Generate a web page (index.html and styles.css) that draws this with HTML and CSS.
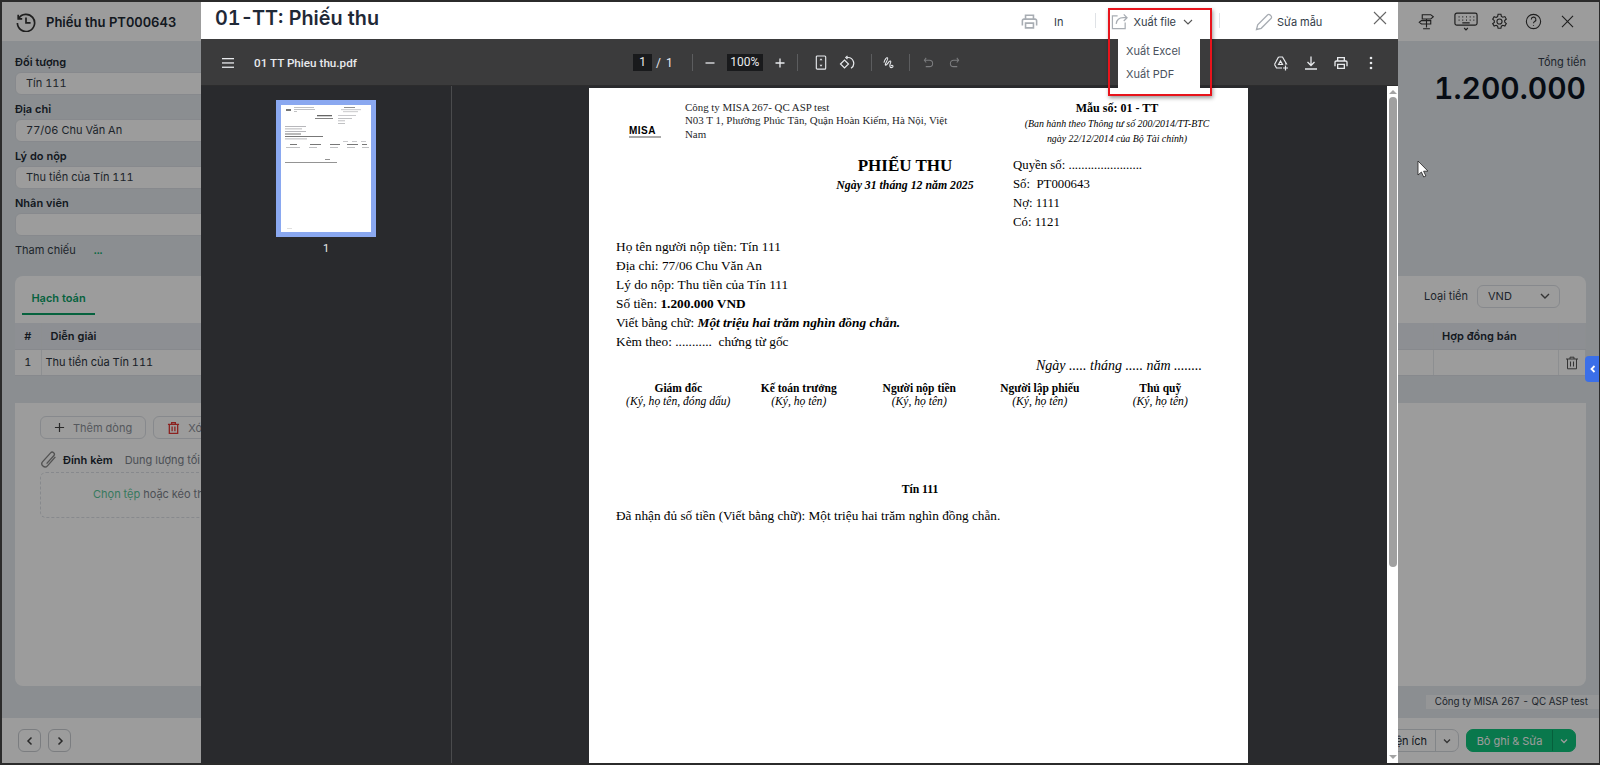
FILE: index.html
```html
<!DOCTYPE html>
<html>
<head>
  <meta charset="utf-8" />
  <title>Phiếu thu PT000643</title>
  <link rel="stylesheet" href="styles.css">
</head>
<body>
<div class="frame">

  <!-- trang phieu thu phia sau -->
  <div class="app">
    <div class="app_header">
      <svg class="hist_icon" viewBox="0 0 20 20" fill="none" stroke="#333" stroke-width="1.7"><path d="M2.6 6.5A8.6 8.6 0 1 1 1.4 11"/><path d="M2.2 2.8v4h4"/><path d="M10 5.5V10.8h4.6"/></svg>
      <div class="app_title">Phiếu thu PT000643</div>
      <div class="app_tools">
        <svg class="sign" viewBox="0 0 20 20" fill="none" stroke="#333" stroke-width="1.3"><path d="M10 7v10M6 18.500h8M5 2h10l3 2.500L15 7H5zM15 9H4L1.500 11 4 13h11z"/></svg>
        <svg class="wide" viewBox="0 0 26 20" fill="none" stroke="#333" stroke-width="1.3"><rect x="1" y="1" width="24" height="13" rx="2"/><path d="M5 5h1M9 5h1M13 5h1M17 5h1M21 5h1M5 8.500h1M9 8.500h1M13 8.500h1M17 8.500h1M21 8.500h1M9 11.500h8M11 17l2 2 2-2"/></svg>
        <svg viewBox="0 0 20 20" fill="none" stroke="#333" stroke-width="1.3"><circle cx="10" cy="10" r="3"/><path d="M8.300 1.500h3.400l.5 2.500 1.700 1 2.400-.8 1.700 2.900-1.900 1.700v1.900l1.900 1.700-1.700 2.900-2.400-.8-1.700 1-.5 2.500H8.300l-.5-2.500-1.700-1-2.400.8-1.700-2.900L3.900 11V9L2 7.300l1.700-2.900 2.400.8 1.700-1z"/></svg>
        <svg viewBox="0 0 20 20" fill="none" stroke="#333" stroke-width="1.3"><circle cx="10" cy="10" r="8.400"/><path d="M7.400 7.600a2.700 2.700 0 1 1 4 2.300c-.9.500-1.400 1-1.400 2.100M10 14v1"/></svg>
        <svg viewBox="0 0 20 20" fill="none" stroke="#333" stroke-width="1.3"><path d="M3.500 3.500l13 13M16.500 3.500l-13 13"/></svg>
      </div>
    </div>

    <div class="app_main">
      <div class="top_row">
        <div class="form">
          <div class="field"><label>Đối tượng</label><div class="input">Tín 111</div></div>
          <div class="field"><label>Địa chỉ</label><div class="input">77/06 Chu Văn An</div></div>
          <div class="field"><label>Lý do nộp</label><div class="input">Thu tiền của Tín 111</div></div>
          <div class="field"><label>Nhân viên</label><div class="input"></div></div>
          <div class="refs">Tham chiếu <span>...</span></div>
        </div>
        <div class="total">
          <div class="total_label">Tổng tiền</div>
          <div class="total_value">1.200.000</div>
        </div>
      </div>

      <div class="card">
        <div class="card_head">
          <div class="tab">Hạch toán</div>
          <div class="currency">
            <span>Loại tiền</span>
            <div class="select">VND
              <svg viewBox="0 0 12 12" fill="none" stroke="#555" stroke-width="1.4"><path d="M2 4l4 4 4-4"/></svg>
            </div>
          </div>
        </div>
        <table class="grid">
          <tr>
            <th class="c_no">#</th><th class="c_desc">Diễn giải</th><th class="c_contract">Hợp đồng bán</th><th class="c_del"></th>
          </tr>
          <tr>
            <td class="c_no">1</td><td>Thu tiền của Tín 111</td><td></td>
            <td class="c_del"><svg viewBox="0 0 14 14" fill="none" stroke="#555" stroke-width="1"><path d="M1 3h12M5 3V1.200h4V3M2.500 3v9.800h9V3M5.500 5.500v5M8.500 5.500v5"/></svg></td>
          </tr>
        </table>
      </div>

      <div class="panel">
        <div class="btn_row">
          <div class="btn"><svg viewBox="0 0 12 12" fill="none" stroke="#444" stroke-width="1.3"><path d="M6 1v10M1 6h10"/></svg>Thêm dòng</div>
          <div class="btn btn_del"><svg viewBox="0 0 14 14" fill="none" stroke="#e53935" stroke-width="1.400"><path d="M1 3h12M5 3V1.200h4V3M2.500 3v9.800h9V3M5.500 5.500v5M8.500 5.500v5"/></svg>Xóa hết dòng</div>
        </div>
        <div class="attach">
          <svg viewBox="0 0 16 18" fill="none" stroke="#888" stroke-width="1.300"><path d="M14.500 6.500L7 15a3 3 0 0 1-4.500-4l7.500-8.300a2 2 0 0 1 3 2.700l-6.800 7.500"/></svg>
          <b>Đính kèm</b><span>Dung lượng tối đa 5MB</span>
        </div>
        <div class="dropzone"><span>Chọn tệp</span> hoặc kéo thả tệp vào đây</div>
      </div>

      <div class="company_row"><div class="company_chip">Công ty MISA 267 - QC ASP test</div></div>
    </div>

    <div class="app_footer">
      <div class="nav_btn"><svg viewBox="0 0 10 10" fill="none" stroke="#444" stroke-width="1.500"><path d="M6.500 1.500L3 5l3.500 3.500"/></svg></div>
      <div class="nav_btn"><svg viewBox="0 0 10 10" fill="none" stroke="#444" stroke-width="1.500"><path d="M3.500 1.500L7 5 3.500 8.500"/></svg></div>
      <div class="foot_right">
        <div class="split">
          <span>Tiện ích</span>
          <i><svg viewBox="0 0 10 10" fill="none" stroke="#555" stroke-width="1.300"><path d="M2 3.500l3 3 3-3"/></svg></i>
        </div>
        <div class="split split_green">
          <span>Bỏ ghi &amp; Sửa</span>
          <i><svg viewBox="0 0 10 10" fill="none" stroke="#fff" stroke-width="1.300"><path d="M2 3.500l3 3 3-3"/></svg></i>
        </div>
      </div>
    </div>
  </div>

  <div class="dim"></div>
  <div class="side_toggle"><svg viewBox="0 0 8 10" fill="none" stroke="#fff" stroke-width="1.800"><path d="M5.500 2L2.500 5l3 3"/></svg></div>

  <!-- cursor -->
  <svg class="cursor" viewBox="0 0 11 18"><path d="M1 1v14l3.400-3 2.300 5 2.200-1-2.300-4.800H11z" fill="#fff" stroke="#222" stroke-width="0.800"/></svg>

  <!-- popup xem mau in -->
  <div class="modal">
    <div class="modal_head">
      <div class="modal_title">01-TT: Phiếu thu</div>
      <div class="act act_print">
        <svg viewBox="0 0 24 24" fill="#a8adb3"><path d="M19 8h-1V3H6v5H5c-1.660 0-3 1.340-3 3v6h4v4h12v-4h4v-6c0-1.660-1.340-3-3-3zM8 5h8v3H8V5zm8 14H8v-4h8v4zm2-2v-4H6v4H4v-6c0-.550.450-1 1-1h14c.550 0 1 .450 1 1v6h-2z"/></svg>
        <span>In</span>
      </div>
      <div class="sep sep_a"></div>
      <div class="act act_export">
        <svg viewBox="0 0 18 18" fill="none" stroke="#a8adb3" stroke-width="1.300"><path d="M7 3H1.500v13.500H15V10"/><path d="M5.500 11.500C6 7.500 9 5 13 5h3.500M13.500 1.500L17 5l-3.500 3.500"/></svg>
        <span>Xuất file</span>
        <svg class="chev" viewBox="0 0 10 10" fill="none" stroke="#555" stroke-width="1.100"><path d="M1 3l4 4 4-4"/></svg>
      </div>
      <div class="sep sep_b"></div>
      <div class="act act_edit">
        <svg viewBox="0 0 18 18" fill="none" stroke="#a8adb3" stroke-width="1.300"><path d="M1.500 16.500l1.200-4.700L12.500 2a1.800 1.800 0 0 1 2.600 0l.9.900a1.800 1.800 0 0 1 0 2.600l-9.800 9.800z"/></svg>
        <span>Sửa mẫu</span>
      </div>
      <svg class="modal_close" viewBox="0 0 14 14" fill="none" stroke="#666" stroke-width="1.100"><path d="M1 1l12 12M13 1L1 13"/></svg>
    </div>

    <div class="pdf_bar">
      <svg class="bar_menu" viewBox="0 0 12 10" fill="#e8eaed"><rect y="0" width="12" height="1.300"/><rect y="4.300" width="12" height="1.300"/><rect y="8.600" width="12" height="1.300"/></svg>
      <div class="pdf_name">01 TT Phieu thu.pdf</div>
      <div class="pager"><span class="page_box">1</span><span class="slash">/</span><span>1</span></div>
      <div class="bar_sep sep_1"></div>
      <svg class="bar_i i_minus" viewBox="0 0 12 12" stroke="#e8eaed" stroke-width="1.300"><path d="M1.500 6h9"/></svg>
      <span class="zoom_box">100%</span>
      <svg class="bar_i i_plus" viewBox="0 0 12 12" stroke="#e8eaed" stroke-width="1.300"><path d="M1.500 6h9M6 1.500v9"/></svg>
      <div class="bar_sep sep_2"></div>
      <svg class="bar_i i_fit" viewBox="0 0 12 16" fill="none" stroke="#e8eaed" stroke-width="1.200"><rect x="1" y="1" width="10" height="14" rx="1"/><path d="M6 3.500l1.500 2h-3zM6 12.500l1.500-2h-3z" fill="#e8eaed" stroke="none"/></svg>
      <svg class="bar_i i_rotate" viewBox="0 0 16 16" fill="none" stroke="#e8eaed" stroke-width="1.200"><path d="M1.500 9L5.500 5l4 4-4 4z"/><path d="M8 2.500h1a5.800 5.800 0 0 1 3 10.700M8.500 .8L6.800 2.500l1.700 1.700"/></svg>
      <div class="bar_sep sep_3"></div>
      <svg class="bar_i i_draw" viewBox="0 0 14 14" fill="none" stroke="#e8eaed" stroke-width="1.100"><path d="M1 6.500C2 3 4 .5 5 1.500 6.200 3 2 7 2.500 9c.4 1.500 2.500-1.500 4-3.500 1-1.200 2.300-.8 1.800.8-.4 1.500-1.600 3-.8 4.700.8 1.500 3.300 1.200 3.300-.5 0-1.500-2-1.500-2.300 0"/></svg>
      <div class="bar_sep sep_4"></div>
      <svg class="bar_i i_undo" viewBox="0 0 12 12" fill="none" stroke="#7c7d7f" stroke-width="1.100"><path d="M3.500 1L1.500 3.500 3.500 6M1.500 3.500H7a3.500 3.500 0 0 1 0 7H3"/></svg>
      <svg class="bar_i i_redo" viewBox="0 0 12 12" fill="none" stroke="#7c7d7f" stroke-width="1.100"><path d="M8.500 1l2 2.500L8.500 6M10.500 3.500H5a3.500 3.500 0 0 0 0 7h4"/></svg>
      <div class="bar_right">
        <svg viewBox="0 0 16 16" fill="none" stroke="#e8eaed" stroke-width="1.200"><path d="M5.500 2h4l4 7H12M1.500 9.500L5.500 2M1.500 9.500l2 3.500h5.500M5.500 9.500L7.500 6l2 3.500z"/><path d="M12.500 10.500v5M10 13h5"/></svg>
        <svg viewBox="0 0 16 16" fill="none" stroke="#e8eaed" stroke-width="1.300"><path d="M8 1.500v8.500M4.500 7L8 10.500 11.500 7M2 14h12"/></svg>
        <svg viewBox="0 0 24 24" fill="#e8eaed"><path d="M19 8h-1V3H6v5H5c-1.660 0-3 1.340-3 3v6h4v4h12v-4h4v-6c0-1.660-1.340-3-3-3zM8 5h8v3H8V5zm8 14H8v-4h8v4zm2-2v-4H6v4H4v-6c0-.550.450-1 1-1h14c.550 0 1 .450 1 1v6h-2z"/></svg>
        <svg viewBox="0 0 16 16" fill="#e8eaed"><circle cx="8" cy="3" r="1.300"/><circle cx="8" cy="8" r="1.300"/><circle cx="8" cy="13" r="1.300"/></svg>
      </div>
    </div>

    <div class="pdf_body">
      <div class="thumbs">
        <div class="thumb">
          <!-- trang thu nho: chi la cac vach mo -->
          <svg class="thumb_page" viewBox="0 0 90 127" fill="#a5a6aa">
            <rect x="5" y="4" width="5" height="2" fill="#777"/>
            <rect x="13" y="2" width="20" height=".7"/><rect x="13" y="4" width="21" height=".7"/><rect x="13" y="6" width="3" height=".7"/>
            <rect x="63" y="2" width="11" height=".8" fill="#777"/><rect x="60" y="4.500" width="20" height=".6"/><rect x="62" y="6.500" width="15" height=".6"/>
            <rect x="36" y="10" width="15" height="1.300" fill="#666"/><rect x="34" y="13" width="18" height=".9" fill="#777"/>
            <rect x="57" y="10" width="18" height=".6"/><rect x="57" y="13" width="14" height=".7"/><rect x="57" y="15.500" width="7" height=".7"/><rect x="57" y="18" width="7" height=".7"/>
            <rect x="4" y="21" width="21" height=".8"/><rect x="4" y="23.500" width="17" height=".8"/><rect x="4" y="26" width="21" height=".8"/><rect x="4" y="28.500" width="16" height="1" fill="#777"/><rect x="4" y="31" width="38" height="1" fill="#777"/><rect x="4" y="33.500" width="22" height=".8"/>
            <rect x="62" y="36" width="5" height=".6"/><rect x="71" y="36" width="5" height=".6"/><rect x="80" y="36" width="5" height=".6"/>
            <rect x="9" y="39" width="7" height="1" fill="#777"/><rect x="29" y="39" width="11" height="1" fill="#777"/><rect x="49" y="39" width="10" height="1" fill="#777"/><rect x="66" y="39" width="11" height="1" fill="#777"/><rect x="81" y="39" width="5" height="1" fill="#777"/>
            <rect x="5" y="42" width="14" height=".7"/><rect x="28" y="42" width="8" height=".7"/><rect x="49" y="42" width="8" height=".7"/><rect x="66" y="42" width="8" height=".7"/><rect x="81" y="42" width="7" height=".7"/>
            <rect x="44" y="54" width="5" height=".8" fill="#777"/>
            <rect x="4" y="57" width="52" height=".9" fill="#888"/>
            <rect x="6" y="123" width="5" height=".6" fill="#ccc"/>
          </svg>
        </div>
        <div class="thumb_no">1</div>
      </div>
      <div class="viewer">
        <div class="paper">
          <div class="p_head">
            <div class="logo"><b>MISA</b><i></i></div>
            <div class="p_company">Công ty MISA 267- QC ASP test<br>N03 T 1, Phường Phúc Tân, Quận Hoàn Kiếm, Hà Nội, Việt Nam</div>
            <div class="p_form">
              <b>Mẫu số: 01 - TT</b>
              <em>(Ban hành theo Thông tư số 200/2014/TT-BTC</em>
              <em>ngày 22/12/2014 của Bộ Tài chính)</em>
            </div>
          </div>
          <div class="p_title_row">
            <div class="p_title">
              <h1>PHIẾU THU</h1>
              <div>Ngày 31 tháng 12 năm 2025</div>
            </div>
            <div class="p_book">
              <div>Quyền số: .......................</div>
              <div>Số:&nbsp; PT000643</div>
              <div>Nợ: 1111</div>
              <div>Có: 1121</div>
            </div>
          </div>
          <div class="p_lines">
            <div>Họ tên người nộp tiền: Tín 111</div>
            <div>Địa chỉ: 77/06 Chu Văn An</div>
            <div>Lý do nộp: Thu tiền của Tín 111</div>
            <div>Số tiền: <b>1.200.000 VND</b></div>
            <div>Viết bằng chữ: <b><i>Một triệu hai trăm nghìn đồng chẵn.</i></b></div>
            <div>Kèm theo: ...........&nbsp; chứng từ gốc</div>
          </div>
          <div class="p_date">Ngày ..... tháng ..... năm ........</div>
          <div class="p_signs">
            <div><b>Giám đốc</b><em>(Ký, họ tên, đóng dấu)</em></div>
            <div><b>Kế toán trưởng</b><em>(Ký, họ tên)</em></div>
            <div><b>Người nộp tiền</b><em>(Ký, họ tên)</em></div>
            <div><b>Người lập phiếu</b><em>(Ký, họ tên)</em></div>
            <div><b>Thủ quỹ</b><em>(Ký, họ tên)</em></div>
          </div>
          <div class="p_payer">Tín 111</div>
          <div class="p_received">Đã nhận đủ số tiền (Viết bằng chữ): Một triệu hai trăm nghìn đồng chẵn.</div>
        </div>
        <div class="scrollbar">
          <span class="arrow_up"></span>
          <div class="scroll_thumb"></div>
          <span class="arrow_down"></span>
        </div>
      </div>
    </div>
  </div>

  <!-- menu xuat file -->
  <div class="export_menu">
    <div>Xuất Excel</div>
    <div>Xuất PDF</div>
  </div>
  <div class="red_box"></div>
</div>
</body>
</html>
```

FILE: styles.css
```css
* {
  margin: 0;
  padding: 0;
  box-sizing: border-box;
}
html, body {
  height: 100%;
  overflow: hidden;
}
body {
  background: #222;
  font-family: "Inter", sans-serif;
  font-variant-numeric: tabular-nums;
  color: #212934;
}
.frame {
  position: relative;
  width: 1600px;
  height: 765px;
  overflow: hidden;
  border: solid #2b2b2b;
  border-width: 2px 1px 2px 2px;
}

/* ---- app behind the popup ---- */
.app {
  display: flex;
  flex-direction: column;
  height: 761px;
  background: #e3e9ee;
}
.app_header {
  display: flex;
  align-items: center;
  height: 39px;
  flex: none;
  background: #fff;
  padding-left: 14px;
}
.hist_icon { width: 20px; height: 20px; }
.app_title {
  margin-left: 10px;
  font-size: 13px;
  font-weight: 600;
}
.app_tools {
  display: flex;
  align-items: center;
  gap: 17px;
  margin-left: auto;
  padding-right: 23px;
}
.app_tools svg { width: 17px; height: 17px; }
.app_tools svg.wide { width: 24px; height: 19px; margin-right: -4px; }
.app_tools svg.sign { margin-right: 2px; }
.app_main {
  flex: 1;
  display: flex;
  flex-direction: column;
  min-height: 0;
}
.top_row {
  display: flex;
  justify-content: space-between;
  height: 235px;
  flex: none;
  padding: 12px 13px 0 13px;
}
.form { width: 400px; }
.field { margin-bottom: 5px; }
.field label {
  display: block;
  height: 19px;
  line-height: 18px;
  font-size: 11px;
  font-weight: 600;
}
.input {
  height: 23px;
  line-height: 21px;
  padding-left: 10px;
  font-size: 11px;
  color: #333c48;
  background: #fff;
  border: 1px solid #dde1e6;
  border-radius: 6px;
}
.refs {
  font-size: 11px;
  line-height: 18px;
  color: #333c48;
}
.refs span {
  margin-left: 15px;
  color: #0fa968;
  font-weight: 600;
}
.total { text-align: right; }
.total_label {
  height: 18px;
  line-height: 18px;
  font-size: 11px;
  color: #333c48;
}
.total_value {
  margin-top: 0;
  font-size: 30px;
  line-height: 34px;
  font-weight: 600;
  color: #0d1522;
}
.card {
  flex: none;
  height: 99px;
  margin: 0 13px;
  background: #fff;
  border-radius: 8px 8px 0 0;
}
.card_head {
  display: flex;
  justify-content: space-between;
  height: 47px;
}
.tab {
  margin-left: 7px;
  width: 73px;
  height: 39px;
  line-height: 44px;
  text-align: center;
  font-size: 11px;
  font-weight: 600;
  color: #0aa066;
  border-bottom: 2px solid #0aa066;
}
.currency {
  display: flex;
  align-items: center;
  gap: 9px;
  height: 36px;
  margin-top: 2px;
  margin-right: 26px;
  font-size: 11px;
  color: #333c48;
}
.select {
  display: flex;
  align-items: center;
  justify-content: space-between;
  width: 83px;
  height: 23px;
  padding: 0 8px 0 10px;
  border: 1px solid #dde1e6;
  border-radius: 6px;
}
.select svg { width: 12px; height: 12px; }
.grid {
  width: 100%;
  table-layout: fixed;
  border-collapse: collapse;
  font-size: 11px;
}
.grid th, .grid td {
  height: 26px;
  padding: 0 8px;
  text-align: left;
  border-bottom: 1px solid #dde1e6;
  border-right: 1px solid #e7eaee;
}
.grid th {
  background: #e7eaf0;
  font-weight: 600;
}
.grid td { padding-left: 4px; background: #fff; color: #2b3441; }
.grid .c_no { width: 26px; padding: 0; text-align: center; }
.grid .c_desc { padding-left: 9px; }
.grid .c_contract { width: 125px; }
.grid .c_del { width: 27px; padding: 0; text-align: center; }
.c_del svg { width: 14px; height: 14px; vertical-align: middle; }
.panel {
  flex: none;
  height: 283px;
  margin: 28px 13px 0 13px;
  padding: 13px 25px 0 25px;
  background: #fff;
  border-radius: 0 0 8px 8px;
}
.btn_row { display: flex; gap: 7px; }
.btn {
  display: flex;
  align-items: center;
  gap: 8px;
  height: 23px;
  padding: 0 13px;
  font-size: 11px;
  color: #8b9098;
  border: 1px solid #dde1e6;
  border-radius: 6px;
}
.btn svg { width: 11px; height: 11px; }
.btn_del svg { width: 13px; height: 14px; }
.attach {
  display: flex;
  align-items: center;
  margin-top: 11px;
  font-size: 11px;
  color: #7d838c;
}
.attach svg { width: 17px; height: 19px; margin-right: 6px; }
.attach b { color: #212934; font-weight: 600; margin-right: 12px; }
.dropzone {
  width: 800px;
  height: 46px;
  margin-top: 3px;
  padding-left: 52px;
  line-height: 42px;
  font-size: 11px;
  color: #7d838c;
  border: 1px dashed #dde1e6;
  border-radius: 6px;
}
.dropzone span { color: #5bc79b; }
.company_row {
  flex: 1;
  display: flex;
  justify-content: flex-end;
  padding-top: 9px;
}
.company_chip {
  height: 14px;
  line-height: 14px;
  padding: 0 11px 0 9px;
  font-size: 9.800px;
  color: #333c48;
  background: #f3f5f7;
}
.app_footer {
  flex: none;
  display: flex;
  align-items: center;
  gap: 7px;
  height: 45px;
  padding: 0 23px 0 16px;
  background: #fff;
}
.nav_btn {
  display: flex;
  align-items: center;
  justify-content: center;
  width: 23px;
  height: 23px;
  border: 1px solid #c9cdd2;
  border-radius: 6px;
}
.nav_btn svg { width: 10px; height: 10px; }
.foot_right {
  display: flex;
  gap: 7px;
  margin-left: auto;
}
.split {
  display: flex;
  align-items: center;
  height: 23px;
  font-size: 11px;
  border: 1px solid #d5d9de;
  border-radius: 7px;
}
.split span { padding: 0 8px 0 12px; }
.split i {
  display: flex;
  align-items: center;
  justify-content: center;
  width: 23px;
  height: 100%;
  border-left: 1px solid #d5d9de;
}
.split i svg { width: 10px; height: 10px; }
.split_green {
  color: #fff;
  background: #10c47c;
  border-color: #10c47c;
}
.split_green span { width: 85px; padding: 0; text-align: center; }
.split_green i { border-left-color: #0a9e63; }
.dim {
  position: absolute;
  inset: 0;
  background: rgba(0, 0, 0, 0.39);
}
.side_toggle {
  position: absolute;
  left: 1583px;
  top: 354px;
  display: flex;
  align-items: center;
  justify-content: center;
  width: 15px;
  height: 26px;
  background: #3b6fe8;
  border-radius: 4px 0 0 4px;
}
.side_toggle svg { width: 8px; height: 10px; }
.cursor {
  position: absolute;
  left: 1415px;
  top: 158px;
  width: 11px;
  height: 18px;
}

/* ---- popup ---- */
.modal {
  position: absolute;
  left: 199px;
  top: 0;
  display: flex;
  flex-direction: column;
  width: 1197px;
  height: 761px;
  background: #fff;
}
.modal_head {
  flex: none;
  display: flex;
  align-items: center;
  height: 37px;
  padding-left: 14px;
}
.modal_title {
  width: 300px;
  margin-top: -6px;
  font-size: 19.800px;
  line-height: 30px;
  font-weight: 600;
  color: #1f2937;
}
.act {
  display: flex;
  align-items: center;
  margin-top: 2px;
  font-size: 11px;
  color: #333c48;
}
.act_print { margin-left: 505px; }
.act_print svg { width: 19px; height: 19px; margin-right: 15px; }
.sep {
  width: 1px;
  height: 15px;
  background: #dfe2e6;
}
.sep_a { margin-left: 32px; }
.act_export { margin-left: 15px; }
.act_export > svg:first-child { width: 17px; height: 17px; margin-right: 5px; }
.chev { width: 10px; height: 10px; margin-left: 7px; }
.sep_b { margin-left: 26px; }
.act_edit { margin-left: 35px; }
.act_edit svg { width: 18px; height: 18px; margin-right: 4px; }
.modal_close {
  width: 14px;
  height: 14px;
  margin-left: 51px;
  margin-top: -6px;
}
.pdf_bar {
  flex: none;
  display: flex;
  align-items: center;
  height: 47px;
  background: #3b3b3c;
  font-family: "Roboto", sans-serif;
  font-size: 12px;
  color: #e8eaed;
  padding-left: 21px;
  box-shadow: inset 0 -1px 0 #2c2c2d;
}
.bar_menu { width: 12px; height: 10px; }
.pdf_name {
  width: 200px;
  margin-left: 20px;
  font-size: 11.700px;
  font-weight: 500;
}
.pager {
  display: flex;
  align-items: center;
  margin-left: 179px;
}
.page_box {
  width: 19px;
  height: 17px;
  line-height: 17px;
  text-align: center;
  background: #191a1c;
}
.slash { margin: 0 5px 0 4px; }
.bar_sep {
  width: 1px;
  height: 17px;
  background: #5c5d5f;
}
.sep_1 { margin-left: 19px; }
.bar_i { flex: none; }
.i_minus { width: 12px; height: 12px; margin-left: 11px; }
.zoom_box {
  width: 36px;
  height: 17px;
  margin-left: 11px;
  line-height: 17px;
  text-align: center;
  background: #191a1c;
}
.i_plus { width: 12px; height: 12px; margin-left: 11px; }
.sep_2 { margin-left: 11px; }
.i_fit { width: 12px; height: 15px; margin-left: 17px; }
.i_rotate { width: 16px; height: 16px; margin-left: 12px; }
.sep_3 { margin-left: 16px; }
.i_draw { width: 13px; height: 14px; margin-left: 11px; }
.sep_4 { margin-left: 13px; }
.i_undo { width: 11px; height: 11px; margin-left: 13px; }
.i_redo { width: 11px; height: 11px; margin-left: 15px; }
.bar_right {
  display: flex;
  align-items: center;
  gap: 14px;
  margin-left: auto;
  padding-right: 19px;
}
.bar_right svg { width: 16px; height: 16px; }
.pdf_body {
  flex: 1;
  display: flex;
  min-height: 0;
  background: #292a2d;
}
.thumbs {
  flex: none;
  width: 251px;
  padding-top: 14px;
  border-right: 1px solid #4a4b4d;
  text-align: center;
}
.thumb {
  width: 100px;
  height: 137px;
  margin-left: 75px;
  padding: 5px;
  background: #8aa8f0;
}
.thumb_page {
  display: block;
  width: 90px;
  height: 127px;
  background: #fff;
}
.thumb_no {
  margin-top: 5px;
  font-family: "Roboto", sans-serif;
  font-size: 11px;
  color: #e8eaed;
}
.viewer {
  flex: 1;
  display: flex;
  justify-content: space-between;
  padding-top: 2px;
  min-width: 0;
}
.paper {
  flex: none;
  width: 659px;
  height: 680px;
  margin-left: 137px;
  padding: 13px 25px 0 27px;
  background: #fff;
  font-family: "Liberation Serif", serif;
  font-size: 13.330px;
  color: #000;
}
.p_head {
  display: flex;
  height: 55px;
}
.logo {
  flex: none;
  width: 69px;
  padding: 25px 0 0 13px;
  line-height: 10px;
  font-family: "Liberation Sans", sans-serif;
  font-size: 10px;
  letter-spacing: 0.5px;
}
.logo i {
  display: block;
  width: 32px;
  height: 2px;
  background: #aaa;
}
.p_company {
  flex: none;
  width: 265px;
  font-size: 10.900px;
  line-height: 13.300px;
  color: #1e1e28;
}
.p_form {
  flex: none;
  width: 200px;
  margin-left: 67px;
  text-align: center;
  font-size: 12px;
  line-height: 15px;
}
.p_form b, .p_form em { display: block; }
.p_form em { font-size: 9.900px; }
.p_title_row { display: flex; }
.p_title {
  flex: none;
  width: 216px;
  margin-left: 181px;
  text-align: center;
  font-weight: bold;
  font-style: italic;
  font-size: 11.800px;
}
.p_title h1 {
  margin-bottom: 2px;
  font-size: 17px;
  line-height: 20px;
  font-style: normal;
}
.p_book { line-height: 19px; font-size: 12.800px; }
.p_lines {
  margin-top: 5px;
  line-height: 19px;
}
.p_date {
  margin-top: 5px;
  padding-right: 21px;
  line-height: 20px;
  font-size: 14px;
  text-align: right;
  font-style: italic;
}
.p_signs {
  display: grid;
  grid-template-columns: repeat(5, 120.500px);
  margin-top: 5px;
  padding-left: 2px;
  text-align: center;
  font-size: 11.500px;
}
.p_signs b { display: block; line-height: 14px; }
.p_signs em { display: block; line-height: 14px; font-size: 11.600px; }
.p_payer {
  width: 608px;
  margin-top: 74px;
  text-align: center;
  font-weight: bold;
  font-size: 11.700px;
  line-height: 14px;
}
.p_received {
  margin-top: 11px;
  line-height: 16px;
  font-size: 13.260px;
}
.scrollbar {
  flex: none;
  display: flex;
  flex-direction: column;
  align-items: center;
  width: 11px;
  margin-top: -2px;
  background: #fff;
}
.arrow_up, .arrow_down {
  flex: none;
  width: 0;
  height: 0;
  border-left: 4px solid transparent;
  border-right: 4px solid transparent;
}
.arrow_up { margin-top: 4px; border-bottom: 4px solid #a3a3a3; }
.arrow_down { margin-top: auto; margin-bottom: 4px; border-top: 4px solid #a3a3a3; }
.scroll_thumb {
  width: 8px;
  height: 470px;
  margin-top: 3px;
  background: #a0a0a0;
  border-radius: 4px;
}

/* ---- export menu + annotation ---- */
.export_menu {
  position: absolute;
  left: 1116px;
  top: 31px;
  width: 82px;
  height: 59px;
  padding: 7px 8px;
  background: #fff;
  border-radius: 4px;
  font-size: 11px;
  line-height: 23px;
  color: #4a525d;
}
.red_box {
  position: absolute;
  left: 1106px;
  top: 6px;
  width: 104px;
  height: 88px;
  border: 2px solid #e8141c;
  box-shadow: 1px 2px 4px rgba(0, 0, 0, 0.4);
}
```
